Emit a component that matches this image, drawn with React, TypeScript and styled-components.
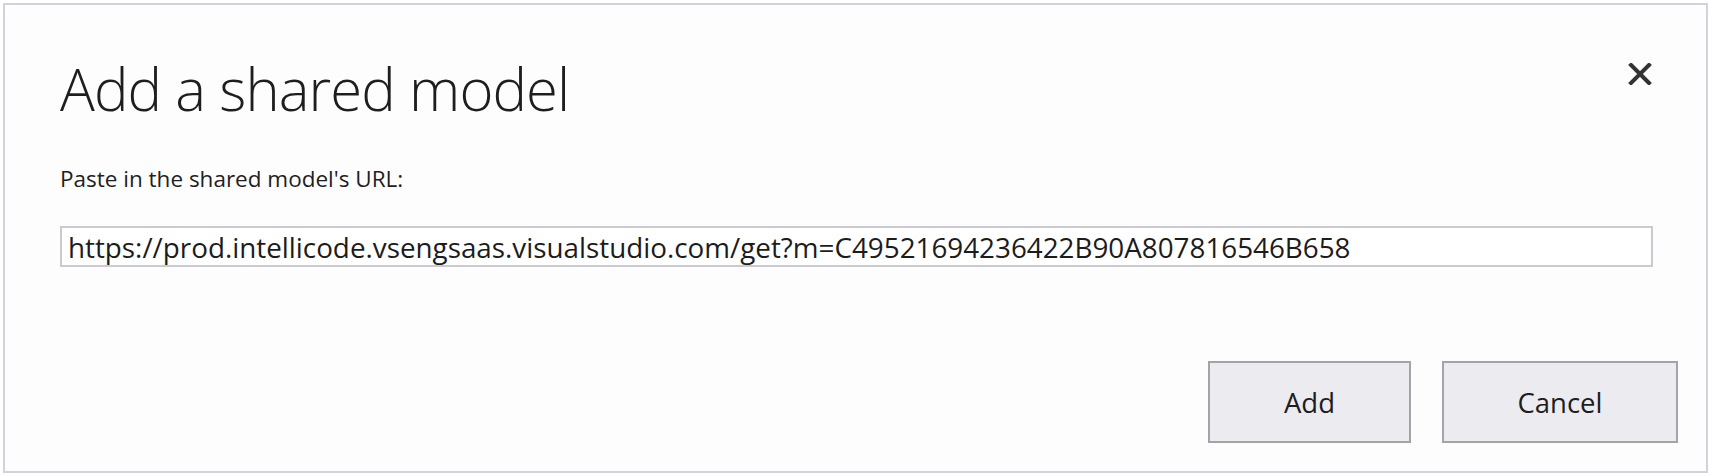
import React from "react";
import styled, { createGlobalStyle } from "styled-components";

const Global = createGlobalStyle`
  html, body {
    margin: 0;
    padding: 0;
    background: #ffffff;
  }
  body {
    font-family: "Open Sans", "Noto Sans", sans-serif;
    color: #1f1f1f;
  }
`;

const Frame = styled.div`
  box-sizing: border-box;
  margin: 3px 5px 0 3px;
  height: 470px;
  border: 2px solid #d2d2de;
  background: #fdfdfd;
  display: flex;
  flex-direction: column;
  padding-left: 55px;
`;

const Header = styled.div`
  display: flex;
  justify-content: space-between;
  align-items: flex-start;
  padding-right: 54px;
`;

const Title = styled.h1`
  margin: 55px 0 0;
  font-size: 58px;
  font-weight: 300;
  line-height: 58px;
  letter-spacing: -0.9px;
  color: #1e1e1e;
`;

const CloseButton = styled.button`
  margin-top: 57px;
  width: 24px;
  height: 24px;
  padding: 0;
  border: none;
  background: transparent;
  display: flex;
  align-items: center;
  justify-content: center;
  cursor: pointer;
`;

const Label = styled.div`
  margin-top: 46px;
  font-size: 22.5px;
  line-height: 30px;
  color: #1f1f1f;
`;

const UrlInput = styled.input`
  box-sizing: border-box;
  margin: 32px 53px 0 0;
  height: 41px;
  padding: 0 0 0 6px;
  border: 2px solid #cacad2;
  background: #ffffff;
  font-family: "Open Sans", "Noto Sans", sans-serif;
  font-size: 27.8px;
  color: #1c1c1c;
  outline: none;
`;

const Footer = styled.div`
  margin-top: auto;
  margin-bottom: 28px;
  padding-right: 28px;
  display: flex;
  justify-content: flex-end;
  gap: 31px;
`;

const DialogButton = styled.button<{ $width: number }>`
  box-sizing: border-box;
  width: ${(p) => p.$width}px;
  height: 82px;
  border: 2px solid #a4a4a6;
  background: #ececf0;
  font-family: "Open Sans", "Noto Sans", sans-serif;
  font-size: 27.5px;
  color: #1e1e1e;
  cursor: pointer;
`;

export default function App() {
  return (
    <>
      <Global />
      <Frame>
        <Header>
          <Title>Add a shared model</Title>
          <CloseButton aria-label="Close">
            <svg width="24" height="22" viewBox="0 0 24 22">
              <path
                d="M3 2 L21 20 M21 2 L3 20"
                stroke="#333"
                strokeWidth="4"
                strokeLinecap="square"
              />
            </svg>
          </CloseButton>
        </Header>
        <Label>Paste in the shared model's URL:</Label>
        <UrlInput
          readOnly
          value="https://prod.intellicode.vsengsaas.visualstudio.com/get?m=C49521694236422B90A807816546B658"
        />
        <Footer>
          <DialogButton $width={203}>Add</DialogButton>
          <DialogButton $width={236}>Cancel</DialogButton>
        </Footer>
      </Frame>
    </>
  );
}
